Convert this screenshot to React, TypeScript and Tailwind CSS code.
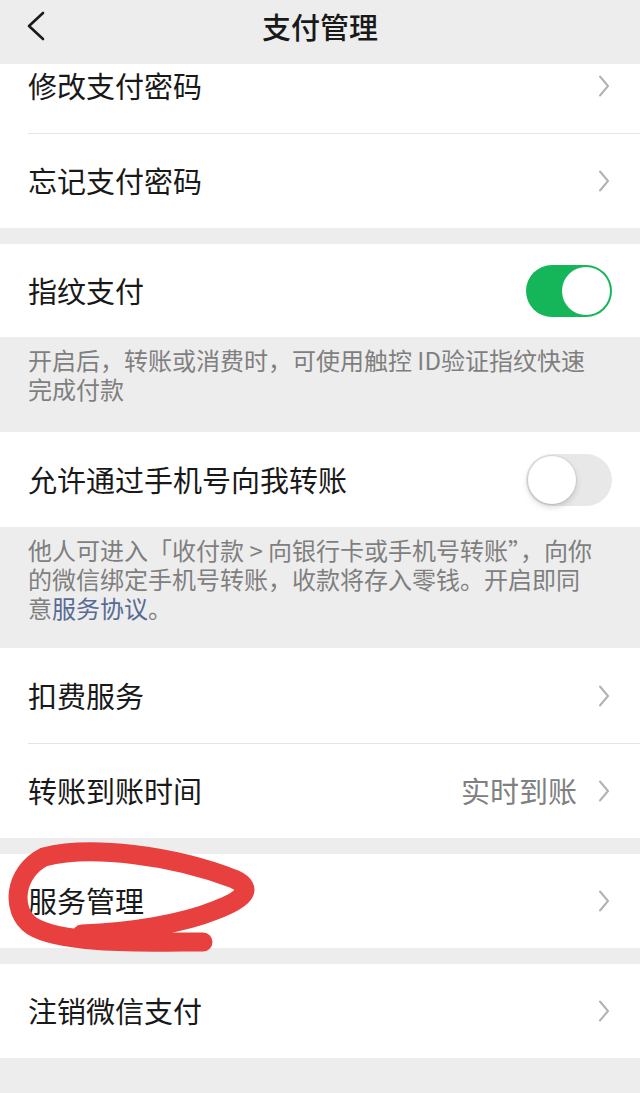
import React from 'react';

const Chevron = () => (
  <svg width="12" height="22" viewBox="0 0 12 22" className="shrink-0">
    <path d="M2 1.5L10 11L2 20.5" fill="none" stroke="#b2b2b2" strokeWidth={2} strokeLinecap="round" strokeLinejoin="round" />
  </svg>
);

const BackIcon = () => (
  <svg width="20" height="30" viewBox="0 0 20 30" className="absolute left-[26px] top-[11px]">
    <path d="M17 2L3 15L17 28" fill="none" stroke="#1a1a1a" strokeWidth={2.6} strokeLinecap="round" strokeLinejoin="round" />
  </svg>
);

interface RowProps {
  label: string;
  value?: string;
  height: string;
  right?: React.ReactNode;
  className?: string;
}

const Row: React.FC<RowProps> = ({ label, value, height, right, className = '' }) => (
  <div className={`flex items-center justify-between bg-white pl-7 ${right ? 'pr-7' : 'pr-[30px]'} ${height} ${className}`}>
    <span className="text-[29px] text-[#191919]">{label}</span>
    {right ?? (
      <div className="flex items-center gap-[21px]">
        {value && <span className="text-[29px] text-[#808080]">{value}</span>}
        <Chevron />
      </div>
    )}
  </div>
);

const Toggle = ({ on }: { on: boolean }) =>
  on ? (
    <div className="flex h-[52px] w-[86px] items-center justify-end rounded-full bg-[#15b65a] p-[2px]">
      <div className="h-12 w-12 rounded-full bg-white" />
    </div>
  ) : (
    <div className="flex h-[52px] w-[86px] items-center rounded-full bg-[#e8e8e9] p-[2px]">
      <div className="h-12 w-12 rounded-full bg-white shadow-[0_0_0_1px_rgba(0,0,0,0.06),0_3px_6px_rgba(0,0,0,0.16)]" />
    </div>
  );

const Divider = () => <div className="ml-7 h-px bg-[#e5e5e5]" />;

export default function App() {
  return (
    <div className="relative min-h-[1093px] w-[640px] overflow-hidden bg-[#ededed] font-['Noto_Sans_CJK_SC',sans-serif]">
      <header className="relative flex h-16 items-start justify-center pt-2">
        <BackIcon />
        <h1 className="text-[29px] font-medium leading-9 text-[#191919]">支付管理</h1>
      </header>

      <div className="overflow-hidden">
        {/* scrolled a little under the title bar */}
        <section className="-mt-[26px] bg-white">
          <Row label="修改支付密码" height="h-[95px]" />
          <Divider />
          <Row label="忘记支付密码" height="h-[94px]" />
        </section>

        <div className="h-4" />

        <Row label="指纹支付" height="h-[93px]" right={<Toggle on />} />
        <p className="px-7 pb-[29px] pt-2 text-[24px] leading-[29px] text-[#7f7f7f]">
          <span className="block whitespace-nowrap">开启后，转账或消费时，可使用触控 ID验证指纹快速</span>
          <span className="block whitespace-nowrap">完成付款</span>
        </p>

        <Row label="允许通过手机号向我转账" height="h-[95px]" right={<Toggle on={false} />} />
        <p className="px-7 pb-[26px] pt-2 text-[24px] leading-[29px] text-[#7f7f7f]">
          <span className="block whitespace-nowrap">他人可进入「收付款 &gt; 向银行卡或手机号转账”，向你</span>
          <span className="block whitespace-nowrap">的微信绑定手机号转账，收款将存入零钱。开启即同</span>
          <span className="block whitespace-nowrap">
            意<span className="text-[#576b95]">服务协议</span>。
          </span>
        </p>

        <section className="bg-white">
          <Row label="扣费服务" height="h-[95px]" />
          <Divider />
          <Row label="转账到账时间" value="实时到账" height="h-[94px]" />
        </section>

        <div className="h-4" />

        <Row label="服务管理" height="h-[94px]" />

        <div className="h-4" />

        <Row label="注销微信支付" height="h-[94px]" />
      </div>

      {/* red hand-drawn mark over the page */}
      <svg
        className="pointer-events-none absolute left-0 top-0"
        width="640"
        height="1093"
        viewBox="0 0 640 1093"
      >
        <path
          d="M203 942 C150 942 62 945 32 926 C10 911 14 872 44 857 C90 845 172 855 234 879 C256 889 242 900 216 910 C182 924 130 932 82 934"
          fill="none"
          stroke="#e8403f"
          strokeWidth={19}
          strokeLinecap="round"
          strokeLinejoin="round"
        />
      </svg>
    </div>
  );
}
